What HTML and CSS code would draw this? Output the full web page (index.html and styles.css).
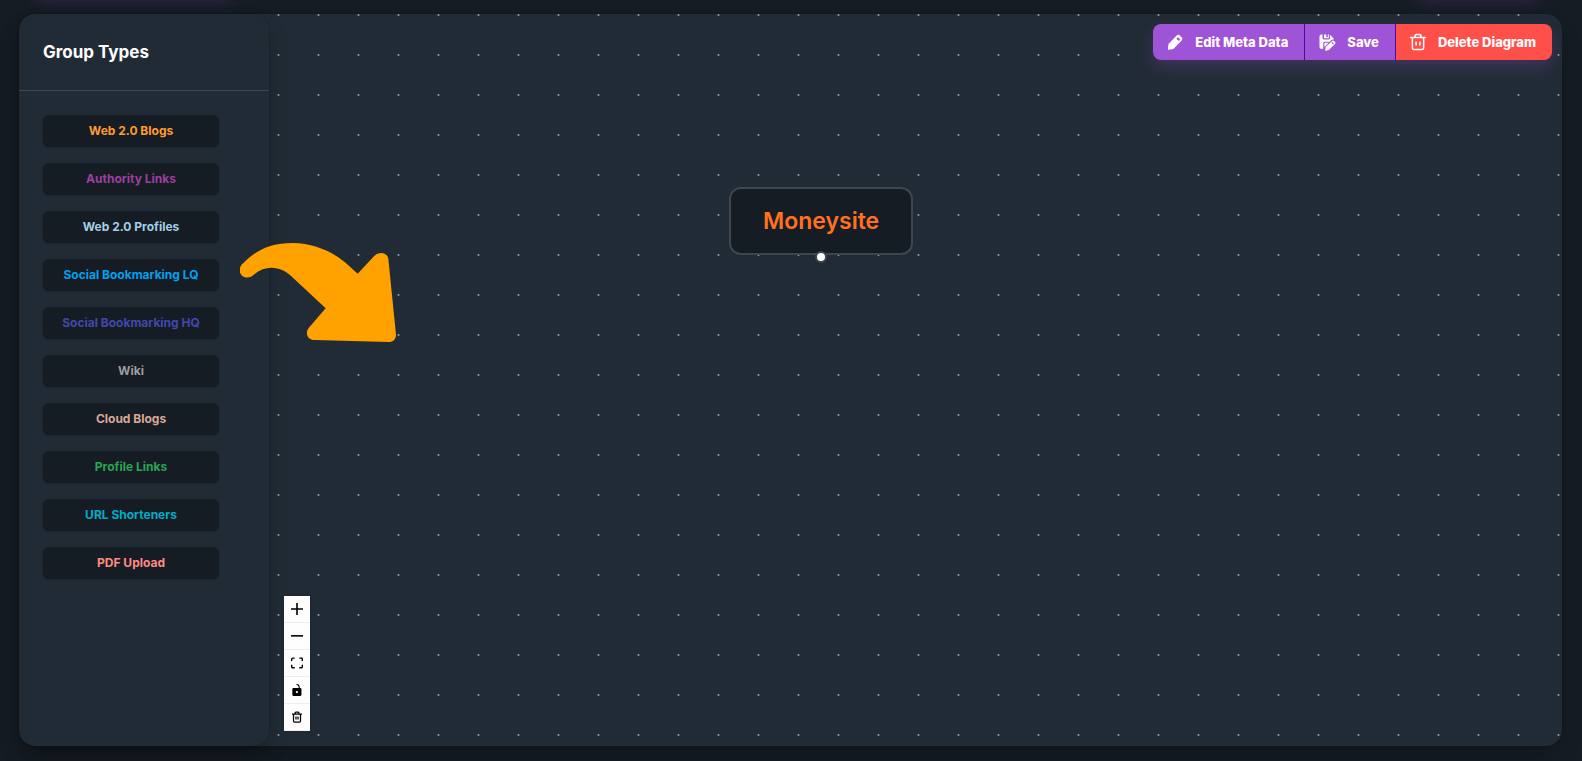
FILE: index.html
```html
<!DOCTYPE html>
<html lang="en">
<head>
<meta charset="utf-8">
<title>Diagram editor</title>
<link rel="stylesheet" href="styles.css">
</head>
<body>
<main class="editor">
  <aside class="sidebar">
    <header class="sidebar-header"><h1 class="sidebar-title">Group Types</h1></header>
    <div class="group-list">
      <button type="button" class="group web-blogs">Web 2.0 Blogs</button>
      <button type="button" class="group authority">Authority Links</button>
      <button type="button" class="group web-profiles">Web 2.0 Profiles</button>
      <button type="button" class="group bookmark-lq">Social Bookmarking LQ</button>
      <button type="button" class="group bookmark-hq">Social Bookmarking HQ</button>
      <button type="button" class="group wiki">Wiki</button>
      <button type="button" class="group cloud">Cloud Blogs</button>
      <button type="button" class="group profile">Profile Links</button>
      <button type="button" class="group shorteners">URL Shorteners</button>
      <button type="button" class="group pdf">PDF Upload</button>
    </div>
  </aside>
  <section class="canvas" aria-label="Diagram">
    <svg class="dots" aria-hidden="true">
      <defs><pattern id="dot-grid" width="40" height="40" patternUnits="userSpaceOnUse" x="-11" y="-19">
        <circle cx="20.5" cy="20" r="1" fill="#919eab"/>
      </pattern></defs>
      <rect width="100%" height="100%" fill="url(#dot-grid)"/>
    </svg>
    <svg class="arrow" viewBox="60 69 468 297" aria-hidden="true">
      <path fill="#ffa200" d="M66 133C108 90 150 69 218 69C282 69 338 96 375 127L413 161L462 109C477 93 502 98 505 116L528 344C528 358 519 366 506 366L284 360C263 360 254 339 266 324L317 265L222 176C187 138 139 132 104 162C78 189 44 159 66 133Z"/>
    </svg>
    <div class="node">Moneysite<span class="handle"></span></div>
    <div class="toolbar">
      <button type="button" class="tool">
        <svg viewBox="0 0 24 24" aria-hidden="true"><path fill="currentColor" fill-rule="evenodd" d="M2.500 21.500l.8-7L14.200 3.300a3 3 0 0 1 4.300 0l2.400 2.400a3 3 0 0 1 0 4.300L10.100 20.900q-.9.900-2 .9l-4.800.4q-.9 0-.8-.7zM13.800 7.600l3.200 3.200 2-2-3.200-3.200z"/></svg>
        Edit Meta Data
      </button>
      <button type="button" class="tool">
        <svg viewBox="0 0 24 24" aria-hidden="true"><g fill="currentColor"><path d="M2 4.500Q2 2 4.500 2H6v5q0 1.500 1.500 1.500h7Q16 8.500 16 7V2.400L20.500 7q.5.500.5 1.300v.5q-2-.5-3.500 1l-2.300 2.300q-.5-.6-1.200-.6H8.500Q7 11.500 7 13v8H4.500Q2 21 2 18.500z"/><path d="M8 2h3v3.500h2V2h1.500v5H8zM8.500 13h5.700l-5 5-.7.900z"/><path fill-rule="evenodd" d="M9.500 22.500l.7-3.700 8.500-8.300q1.300-1.200 2.600 0l1.500 1.500q1.200 1.300 0 2.600l-8.500 8.200-3.900.7q-1.200 0-.9-1zM18 13l2.200 2.200.9-.9L19 12z"/></g></svg>
        Save
      </button>
      <button type="button" class="tool danger">
        <svg viewBox="0 0 24 24" aria-hidden="true"><path fill="none" stroke="currentColor" stroke-width="2" stroke-linecap="round" stroke-linejoin="round" d="M2 6h20M4.500 6v14a2 2 0 0 0 2 2h11a2 2 0 0 0 2-2V6M8 5.500V4a2 2 0 0 1 2-2h4a2 2 0 0 1 2 2v1.500M9.500 12v4M14.500 12v4"/></svg>
        Delete Diagram
      </button>
    </div>
    <div class="controls">
      <button type="button" class="control" aria-label="Zoom in"><svg viewBox="0 0 32 32"><path d="M32 18.133H18.133V32h-4.266V18.133H0v-4.266h13.867V0h4.266v13.867H32z"/></svg></button>
      <button type="button" class="control" aria-label="Zoom out"><svg viewBox="0 0 32 5"><path d="M0 0h32v4.200H0z"/></svg></button>
      <button type="button" class="control" aria-label="Fit view"><svg viewBox="0 0 32 30"><path d="M3.692 4.630c0-.53.4-.938.939-.938h5.215V0H4.708C2.130 0 0 2.054 0 4.630v5.216h3.692V4.631zM27.354 0h-5.200v3.692h5.170c.53 0 .984.4.984.939v5.215H32V4.631A4.624 4.624 0 0027.354 0zm.954 24.830c0 .532-.4.940-.939.940h-5.215v3.768h5.215c2.577 0 4.631-2.130 4.631-4.707v-5.139h-3.692v5.139zm-23.677.940c-.531 0-.939-.4-.939-.940v-5.138H0v5.139c0 2.577 2.130 4.707 4.708 4.707h5.138V25.770H4.631z"/></svg></button>
      <button type="button" class="control" aria-label="Lock"><svg viewBox="0 0 25 32"><path d="M21.333 10.667H19.810V7.619C19.810 3.429 16.380 0 12.190 0c-4.114 1.828-1.370 2.133.305 2.438 1.676.305 4.420 2.590 4.420 5.181v3.048H3.047A3.056 3.056 0 000 13.714v15.238A3.056 3.056 0 003.048 32h18.285a3.056 3.056 0 003.048-3.048V13.714a3.056 3.056 0 00-3.048-3.047zM12.190 24.533a3.056 3.056 0 01-3.047-3.047 3.056 3.056 0 013.047-3.048 3.056 3.056 0 013.048 3.048 3.056 3.056 0 01-3.048 3.047z"/></svg></button>
      <button type="button" class="control" aria-label="Clear"><svg viewBox="0 0 24 24"><path fill="none" stroke="#000" stroke-width="2.500" stroke-linejoin="round" d="M2 6h20M5 6v14a2 2 0 0 0 2 2h10a2 2 0 0 0 2-2V6M8 6V4a2 2 0 0 1 2-2h4a2 2 0 0 1 2 2v2M10 11v6M14 11v6"/></svg></button>
    </div>
  </section>
</main>
</body>
</html>
```

FILE: styles.css
```css
* { box-sizing: border-box; }

body {
  margin: 0;
  height: 100vh;
  padding: 14px 20px 15px 19px;
  display: flex;
  background: #161c24;
  font-family: Inter, "Open Sans", sans-serif;
  color: #fff;
  overflow: hidden;
}

/* Glow of the buttons above the editor */
body::before,
body::after {
  content: "";
  position: absolute;
  top: -20px;
  height: 12px;
  box-shadow: 0 8px 16px rgba(159, 83, 214, 0.24);
}
body::before { left: 36px; width: 196px; }
body::after { right: 44px; width: 120px; }

button {
  border: 0;
  padding: 0;
  font-family: inherit;
  cursor: pointer;
}

.editor {
  flex: 1;
  display: flex;
  border-radius: 16px;
  background: #212b35;
  box-shadow: 0 0 2px rgba(0, 0, 0, 0.2), 0 12px 24px -4px rgba(0, 0, 0, 0.24);
}

.sidebar {
  flex: 0 0 250px;
  border-radius: 16px;
  box-shadow: 0 0 2px rgba(0, 0, 0, 0.2), 0 12px 24px -4px rgba(0, 0, 0, 0.24);
}

.sidebar-header {
  height: 77px;
  padding: 24px;
  border-bottom: 1px solid #3c4650;
}

.sidebar-title {
  margin: 0;
  font-size: 17px;
  line-height: 28px;
  font-weight: 700;
}

.group-list {
  display: flex;
  flex-direction: column;
  gap: 16px;
  padding: 24px 50px 24px 24px;
}

.group {
  height: 32px;
  border-radius: 6px;
  background: #161c24;
  box-shadow: 0 1px 2px rgba(0, 0, 0, 0.2);
  font-size: 12px;
  line-height: 18px;
  font-weight: 700;
}
.web-blogs { color: #ff9a2e; }
.authority { color: #9b3fa0; }
.web-profiles { color: #a3cfe4; }
.bookmark-lq { color: #03a0f0; }
.bookmark-hq { color: #4147ae; }
.wiki { color: #9e9e9e; }
.cloud { color: #d8a898; }
.profile { color: #26a653; }
.shorteners { color: #00acc8; }
.pdf { color: #ff8a80; }

.canvas {
  position: relative;
  flex: 1;
}

.dots {
  position: absolute;
  inset: 0;
  width: 100%;
  height: 100%;
  border-radius: 0 16px 16px 0;
}

.arrow {
  position: absolute;
  left: -29px;
  top: 229px;
  width: 156px;
  height: 99px;
}

.node {
  position: absolute;
  left: 460px;
  top: 173px;
  padding: 14px 32px;
  border: 2px solid #3c4650;
  border-radius: 12px;
  background: #161c24;
  color: #ff7120;
  font-size: 23px;
  line-height: 36px;
  font-weight: 600;
}

.handle {
  position: absolute;
  left: calc(50% - 6px);
  bottom: -10px;
  width: 12px;
  height: 12px;
  border: 2px solid #3c4650;
  border-radius: 50%;
  background: #fff;
}

.toolbar {
  position: absolute;
  top: 10px;
  right: 10px;
  display: flex;
  border-radius: 8px;
  box-shadow: 0 8px 16px rgba(159, 83, 214, 0.24);
}

.tool {
  display: flex;
  align-items: center;
  gap: 11px;
  height: 36px;
  padding: 0 16px 0 13px;
  border-right: 1px solid #5209a0;
  background: #9f53d6;
  color: #fff;
  font-size: 13px;
  line-height: 24px;
  font-weight: 800;
}
.tool:first-child { border-radius: 8px 0 0 8px; }
.tool:last-child { border-radius: 0 8px 8px 0; }
.tool.danger { background: #ff4f49; border-right: 0; }
.tool svg { width: 18px; height: 18px; }

.controls {
  position: absolute;
  left: 15px;
  bottom: 15px;
  box-shadow: 0 0 2px 1px rgba(0, 0, 0, 0.08);
}

.control {
  display: flex;
  align-items: center;
  justify-content: center;
  width: 26px;
  height: 27px;
  border-bottom: 1px solid #eee;
  background: #fefefe;
}
.control svg { width: 12px; height: 12px; }
```
